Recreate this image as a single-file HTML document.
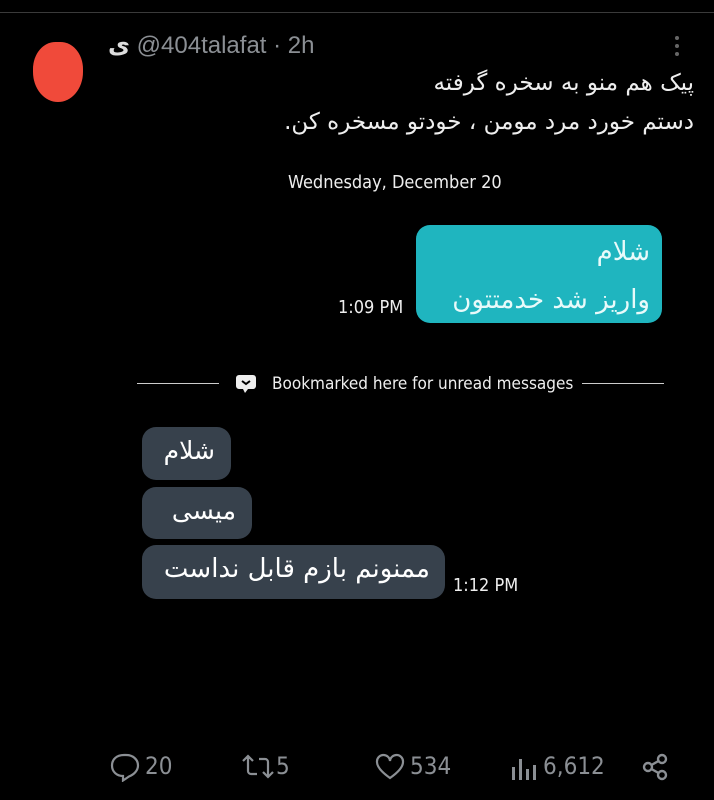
<!DOCTYPE html>
<html><head><meta charset="utf-8"><style>
body{margin:0;width:714px;height:800px;background:#000;position:relative;overflow:hidden;font-family:"Liberation Sans","DejaVu Sans",sans-serif;color:#fff}
.a{position:absolute}
.fa{font-family:"DejaVu Sans","Noto Sans CJK SC",sans-serif;direction:rtl;white-space:nowrap}
.b{position:absolute;background:#37414c;border-radius:14px}
.n{font-family:"Liberation Sans Narrow","DejaVu Sans Condensed","Liberation Sans",sans-serif}
svg{position:absolute}
</style></head><body>
<div class="a" style="left:0;top:12px;width:714px;height:1px;background:#3a3a3a"></div>
<div class="a" style="left:33px;top:42px;width:50px;height:60px;background:#f04a3a;border-radius:45% 45% 50% 50%"></div>
<div class="a" style="left:108px;top:31px;font-size:24px;color:#8b8f94;white-space:nowrap"><span style="color:#ddd;font-weight:bold">ی</span> <span dir="ltr">@404talafat · 2h</span></div>
<div class="a" style="left:675px;top:36px;width:4px">
<div style="width:4px;height:4px;border-radius:2px;background:#666;margin-bottom:4px"></div><div style="width:4px;height:4px;border-radius:2px;background:#666;margin-bottom:4px"></div><div style="width:4px;height:4px;border-radius:2px;background:#666"></div></div>
<div class="a fa" style="right:20px;top:64px;font-size:23px;line-height:39px;text-align:right;color:#eee">پیک هم منو به سخره گرفته<br>دستم خورد مرد مومن ، خودتو مسخره کن.</div>
<div class="a n" style="left:288px;top:172px;font-size:18px;color:#eee">Wednesday, December 20</div>
<div class="a" style="left:416px;top:225px;width:246px;height:98px;background:#1fb5bf;border-radius:14px"></div>
<div class="a fa" style="right:64px;top:228px;font-size:26px;line-height:48px;text-align:right;color:#e8fafa">شلام<br>واریز شد خدمتتون</div>
<div class="a n" style="left:338px;top:297px;font-size:18px;color:#eee">1:09 PM</div>
<div class="a" style="left:137px;top:383px;width:82px;height:1px;background:#ccc"></div>
<div class="a" style="left:582px;top:383px;width:82px;height:1px;background:#ccc"></div>
<svg style="left:235px;top:374px" width="22" height="22" viewBox="0 0 22 22"><path d="M4 1h14a3 3 0 0 1 3 3v8a3 3 0 0 1-3 3h-5l-3 4-2-4H4a3 3 0 0 1-3-3V4a3 3 0 0 1 3-3z" fill="#eee"/><path d="M7 7l4 3 4-3" stroke="#000" stroke-width="2" fill="none"/></svg>
<div class="a n" style="left:272px;top:374px;font-size:17px;color:#eee">Bookmarked here for unread messages</div>
<div class="b" style="left:142px;top:427px;width:89px;height:53px"></div>
<div class="b" style="left:142px;top:487px;width:110px;height:52px"></div>
<div class="b" style="left:142px;top:545px;width:303px;height:54px"></div>
<div class="a fa" style="right:499px;top:436px;font-size:25px">شلام</div>
<div class="a fa" style="right:478px;top:496px;font-size:25px">میسی</div>
<div class="a fa" style="right:284px;top:554px;font-size:26px">ممنونم بازم قابل نداست</div>
<div class="a n" style="left:453px;top:575px;font-size:18px;color:#eee">1:12 PM</div>
<svg style="left:110px;top:752px" width="30" height="30" viewBox="0 0 30 30" fill="none" stroke="#8b8f94" stroke-width="2.2"><path d="M13 24C7 24 2 20 2 13.5S7 3 14 3h2c7 0 12 4.5 12 10.5 0 5-4 9-9 11l-6 4z"/></svg>
<div class="a n" style="left:145px;top:752px;font-size:24px;color:#8b8f94">20</div>
<svg style="left:240px;top:753px" width="36" height="28" viewBox="0 0 36 28" fill="none" stroke="#8b8f94" stroke-width="2.2"><path d="M3 8l5-5 5 5M8 3v15a3 3 0 0 0 3 3h6M33 19l-5 5-5-5M28 24V9a3 3 0 0 0-3-3h-6"/></svg>
<div class="a n" style="left:276px;top:752px;font-size:24px;color:#8b8f94">5</div>
<svg style="left:375px;top:753px" width="30" height="28" viewBox="0 0 30 28" fill="none" stroke="#8b8f94" stroke-width="2.2"><path d="M15 25C5 18 2 13 2 9a6.5 6.5 0 0 1 13-1 6.5 6.5 0 0 1 13 1c0 4-3 9-13 16z"/></svg>
<div class="a n" style="left:410px;top:752px;font-size:24px;color:#8b8f94">534</div>
<svg style="left:511px;top:755px" width="26" height="26" viewBox="0 0 26 26" fill="#8b8f94"><rect x="1" y="12" width="3" height="13"/><rect x="8" y="4" width="3" height="21"/><rect x="15" y="14" width="3" height="11"/><rect x="22" y="10" width="3" height="15"/></svg>
<div class="a n" style="left:543px;top:752px;font-size:24px;color:#8b8f94">6,612</div>
<svg style="left:642px;top:753px" width="28" height="28" viewBox="0 0 28 28" fill="none" stroke="#8b8f94" stroke-width="2.4"><circle cx="6" cy="14" r="4"/><circle cx="20" cy="6" r="4"/><circle cx="20" cy="22" r="4"/><path d="M9.5 12l7-4M9.5 16l7 4"/></svg>
</body></html>
